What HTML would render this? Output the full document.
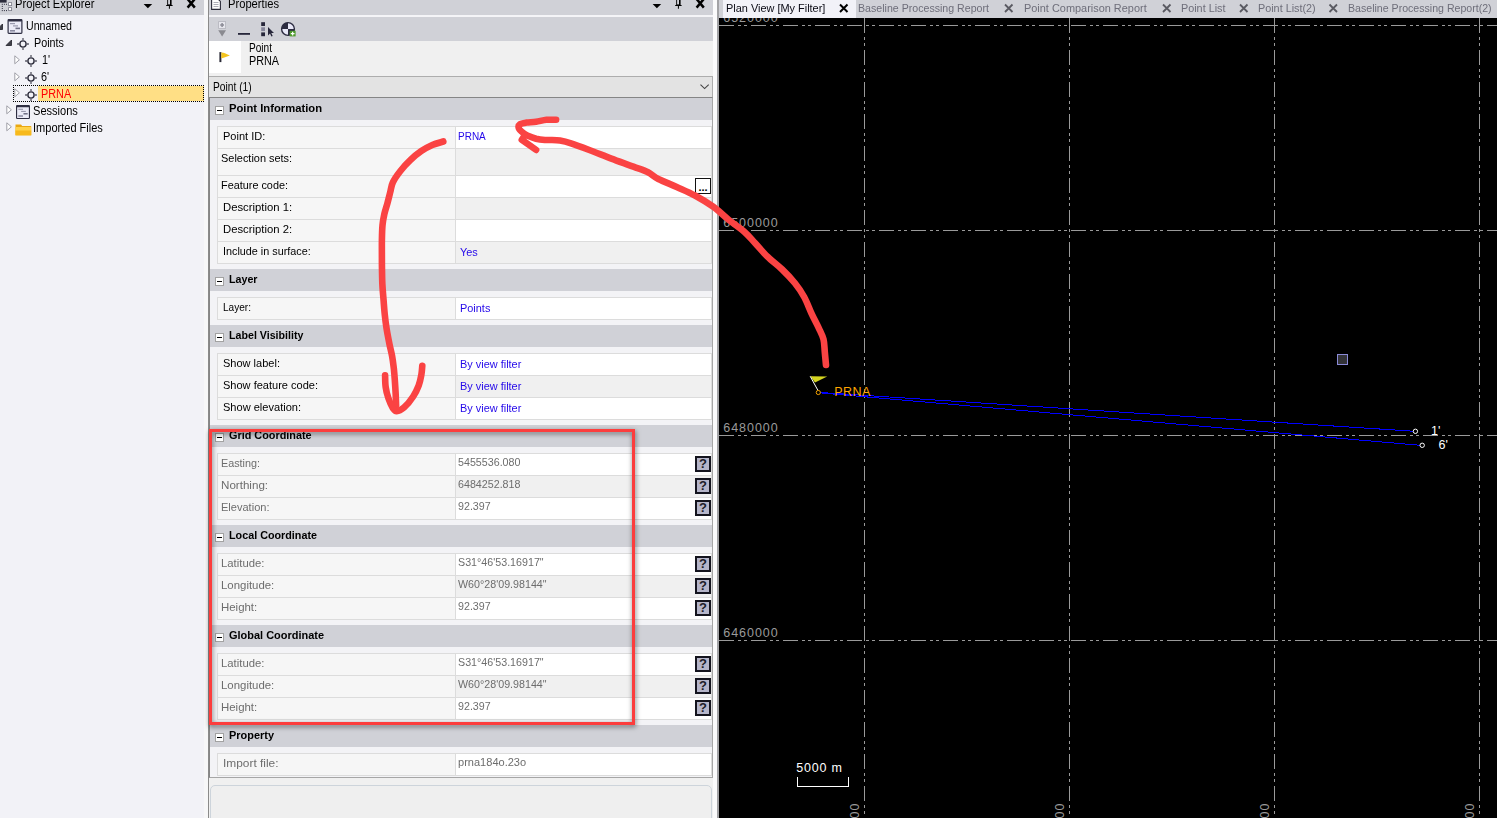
<!DOCTYPE html>
<html>
<head>
<meta charset="utf-8">
<title>Properties</title>
<style>
html,body{margin:0;padding:0}
body{width:1497px;height:818px;overflow:hidden;position:relative;background:#f0f0f5;font-family:"Liberation Sans",sans-serif;font-size:11px;color:#000}
.abs{position:absolute}
.t{position:absolute;white-space:nowrap;line-height:14px;height:14px}
.s{position:absolute;white-space:nowrap;line-height:14px;height:14px;font-size:11.5px;transform:scaleX(.95);transform-origin:0 50%}
#left{position:absolute;left:0;top:0;width:204px;height:818px;background:#f2f2f7}
#lhead{position:absolute;left:0;top:0;width:204px;height:15px;background:#d0d1d7}
#split1{position:absolute;left:204px;top:0;width:5px;height:818px;background:#f7f7f8}
#props{position:absolute;left:209px;top:0;width:504px;height:818px;background:#f0f0f0}
#phead{position:absolute;left:0;top:0;width:504px;height:15px;background:#d0d1d7}
#ptool{position:absolute;left:0;top:17px;width:504px;height:24px;background:#d0d1d7}
#pgap{position:absolute;left:0;top:15px;width:504px;height:2px;background:#f4f4f7}
#pico{position:absolute;left:0;top:41px;width:32px;height:32px;background:#fff}
#pdrop{position:absolute;left:0;top:76px;width:504px;height:21px;background:#e3e3e3;border-top:1px solid #adadad;border-right:1px solid #adadad;box-sizing:border-box}
#grid{position:absolute;left:0;top:97px;width:504px;height:681px;background:#f3f3f6;border-left:1px solid #858585;border-top:1px solid #858585;border-bottom:1px solid #a6a6a6;border-right:1px solid #a6a6a6;box-sizing:border-box}
.sec{position:absolute;left:210px;width:502px;height:22px;background:#d0d1d7}
.sec b{position:absolute;left:19px;top:3px;font-size:11.5px;line-height:14px;white-space:nowrap;transform:scaleX(.98);transform-origin:0 50%}
.sec i{position:absolute;left:5px;top:8px;width:9px;height:9px;background:#fff;border:1px solid #a2a2a2;box-sizing:border-box}
.sec i:after{content:"";position:absolute;left:1px;top:2.6px;width:5px;height:1.7px;background:#000}
.row{position:absolute;left:217px;width:495px;height:22px;box-sizing:border-box;border:1px solid #dcdcdc;border-top:none;background:#f6f6f6}
.row.first{border-top:1px solid #dcdcdc}
.row .v{position:absolute;left:237px;top:0;right:0;bottom:0;border-left:1px solid #dcdcdc;background:#fff}
.row.alt .v{background:#f0f0f0}
.row .l{position:absolute;left:5.4px;top:2px;white-space:nowrap;line-height:14px;font-size:11.5px;transform:scaleX(.95);transform-origin:0 50%}
.row .x{position:absolute;left:4px;top:3px;white-space:nowrap;line-height:14px;font-size:11.5px;transform:scaleX(.95);transform-origin:0 50%;color:#2408ea}
.row.ro .l{color:#6d6d6d;left:3px}
.row.ro .x{color:#6d6d6d;left:2px;top:1px;transform:scaleX(.93)}
.q{position:absolute;right:0;top:2px;width:16px;height:16px;box-sizing:border-box;border:2px solid #14141e;background:#b5b5c9;font-weight:bold;font-size:13px;line-height:12px;text-align:center;color:#1c1c28}
#plan{position:absolute;left:719px;top:18px;width:778px;height:800px;background:#000}
#tabs{position:absolute;left:719px;top:0;width:778px;height:18px;background:#d0d1d7}
.tab{position:absolute;top:1px;white-space:nowrap;line-height:14px;font-size:11.5px;color:#6e6e7a;transform:scaleX(.95);transform-origin:0 50%}
</style>
</head>
<body>
<div id="left"></div>
<div id="lhead"></div>

<!-- LEFT PANEL: project explorer -->
<svg class="abs" style="left:0;top:0" width="14" height="12" viewBox="0 0 14 12">
  <rect x="0" y="0" width="6.6" height="2.6" fill="#2b2b3b"/>
  <g fill="#2b2b3b"><rect x="1.8" y="3.8" width="1" height="1"/><rect x="3.9" y="3.8" width="1" height="1"/><rect x="6" y="3.8" width="1" height="1"/><rect x="1.8" y="5.9" width="1" height="1"/><rect x="1.8" y="8" width="1" height="1"/><rect x="1.8" y="10.1" width="1" height="1"/><rect x="3.9" y="10.1" width="1" height="1"/><rect x="6" y="10.1" width="1" height="1"/></g>
  <rect x="8.6" y="2.6" width="3" height="3" fill="#fff" stroke="#7a7a88" stroke-width=".8"/>
  <rect x="8.6" y="7.6" width="3" height="3" fill="#fff" stroke="#7a7a88" stroke-width=".8"/>
</svg>
<div class="t" style="left:15px;top:-3.3px;font-size:12px;transform:scaleX(.931);transform-origin:0 50%">Project Explorer</div>
<svg class="abs" style="left:140px;top:0" width="60" height="12" viewBox="0 0 60 12">
  <path d="M3.6 4h8.6l-4.3 4.3z" fill="#000"/>
  <path d="M27.2 0h4.4v5h-4.4z M26.2 5h6.4v1h-6.4z M28.9 6h1v2.8h-1z" fill="#000"/>
  <rect x="28.1" y="0" width="1.9" height="4.4" fill="#d0d1d7"/>
  <path d="M47.6 -1l7.2 8.6M54.8 -1l-7.2 8.6" stroke="#000" stroke-width="2.5" fill="none"/>
</svg>
<svg class="abs" style="left:-4px;top:23px" width="8" height="8" viewBox="0 0 8 8"><path d="M6.5 1v5.5h-5.5z" fill="#404048" stroke="#202028" stroke-width=".8"/></svg><svg class="abs" style="left:7px;top:19px" width="16" height="15" viewBox="0 0 15 15"><rect x=".6" y=".6" width="13.8" height="13.8" rx=".8" fill="#ebebf7" stroke="#2e2e42" stroke-width="1.2"/><rect x=".6" y=".4" width="13.8" height="2" rx=".6" fill="#2e2e42"/><rect x="2.5" y="4" width="5" height="1.2" fill="#9a9aae"/><rect x="5.5" y="6.3" width="5" height="1.2" fill="#9a9aae"/><rect x="8" y="8.6" width="4.5" height="1.6" fill="#6e6e84"/><rect x="2.5" y="11" width="5" height="1.6" fill="#8a8aa0"/></svg><div class="t" style="left:25.5px;top:18.7px;font-size:12px;transform:scaleX(0.884);transform-origin:0 50%">Unnamed</div>
<svg class="abs" style="left:5px;top:39px" width="8" height="8" viewBox="0 0 8 8"><path d="M6.5 1v5.5h-5.5z" fill="#404048" stroke="#202028" stroke-width=".8"/></svg><svg class="abs" style="left:16px;top:37px" width="14" height="14" viewBox="0 0 14 14"><circle cx="7" cy="7" r="3.1" fill="#f2f2f7" stroke="#2e2e3c" stroke-width="1.4"/><path d="M7 1.1v2.2M7 10.7v2.2M1.1 7h2.2M10.7 7h2.2" stroke="#555562" stroke-width="1.3"/></svg><div class="t" style="left:33.5px;top:35.7px;font-size:12px;transform:scaleX(0.896);transform-origin:0 50%">Points</div>
<svg class="abs" style="left:14px;top:55px" width="7" height="10" viewBox="0 0 7 10"><path d="M.8 .8v8l4.6-4z" fill="#fff" stroke="#a0a0a8" stroke-width="1"/></svg><svg class="abs" style="left:24px;top:54px" width="14" height="14" viewBox="0 0 14 14"><circle cx="7" cy="7" r="3.1" fill="#f2f2f7" stroke="#2e2e3c" stroke-width="1.4"/><path d="M7 1.1v2.2M7 10.7v2.2M1.1 7h2.2M10.7 7h2.2" stroke="#555562" stroke-width="1.3"/></svg><div class="t" style="left:41.5px;top:52.7px;font-size:12px;transform:scaleX(0.9);transform-origin:0 50%">1'</div>
<svg class="abs" style="left:14px;top:72px" width="7" height="10" viewBox="0 0 7 10"><path d="M.8 .8v8l4.6-4z" fill="#fff" stroke="#a0a0a8" stroke-width="1"/></svg><svg class="abs" style="left:24px;top:71px" width="14" height="14" viewBox="0 0 14 14"><circle cx="7" cy="7" r="3.1" fill="#f2f2f7" stroke="#2e2e3c" stroke-width="1.4"/><path d="M7 1.1v2.2M7 10.7v2.2M1.1 7h2.2M10.7 7h2.2" stroke="#555562" stroke-width="1.3"/></svg><div class="t" style="left:41px;top:69.7px;font-size:12px;transform:scaleX(0.9);transform-origin:0 50%">6'</div>
<div class="abs" style="left:38px;top:86px;width:166px;height:15px;background:#ffdf85"></div>
<div class="abs" style="left:13px;top:85px;width:191px;height:17px;box-sizing:border-box;border:1px dotted #000"></div>
<svg class="abs" style="left:14px;top:88px" width="7" height="10" viewBox="0 0 7 10"><path d="M.8 .8v8l4.6-4z" fill="#fff" stroke="#a0a0a8" stroke-width="1"/></svg><svg class="abs" style="left:24px;top:88px" width="14" height="14" viewBox="0 0 14 14"><circle cx="7" cy="7" r="3.1" fill="#f2f2f7" stroke="#2e2e3c" stroke-width="1.4"/><path d="M7 1.1v2.2M7 10.7v2.2M1.1 7h2.2M10.7 7h2.2" stroke="#555562" stroke-width="1.3"/></svg><div class="t" style="left:41px;top:86.7px;color:#f00;font-size:12px;transform:scaleX(0.903);transform-origin:0 50%">PRNA</div>
<svg class="abs" style="left:6px;top:105px" width="7" height="10" viewBox="0 0 7 10"><path d="M.8 .8v8l4.6-4z" fill="#fff" stroke="#a0a0a8" stroke-width="1"/></svg><svg class="abs" style="left:16px;top:105px" width="14" height="14" viewBox="0 0 15 15"><rect x=".6" y=".6" width="13.8" height="13.8" rx=".8" fill="#ebebf7" stroke="#2e2e42" stroke-width="1.2"/><rect x=".6" y=".4" width="13.8" height="2" rx=".6" fill="#2e2e42"/><rect x="2.5" y="4" width="5" height="1.2" fill="#9a9aae"/><rect x="5.5" y="6.3" width="5" height="1.2" fill="#9a9aae"/><rect x="8" y="8.6" width="4.5" height="1.6" fill="#6e6e84"/><rect x="2.5" y="11" width="5" height="1.6" fill="#8a8aa0"/></svg><div class="t" style="left:33px;top:103.7px;font-size:12px;transform:scaleX(0.922);transform-origin:0 50%">Sessions</div>
<svg class="abs" style="left:6px;top:122px" width="7" height="10" viewBox="0 0 7 10"><path d="M.8 .8v8l4.6-4z" fill="#fff" stroke="#a0a0a8" stroke-width="1"/></svg><svg class="abs" style="left:15px;top:122px" width="17" height="14" viewBox="0 0 17 14"><path d="M.5 2.5h5.5l1.2 1.4h9v9.3h-15.7z" fill="#e9a712"/><path d="M.5 5h15.7v8.2h-15.7z" fill="#ffd24a"/><path d="M.5 8.5h15.7v4.7h-15.7z" fill="#f7b91c"/></svg><div class="t" style="left:33px;top:120.7px;font-size:12px;transform:scaleX(0.919);transform-origin:0 50%">Imported Files</div>
<div id="split1"></div>
<div class="abs" style="left:208px;top:0;width:1px;height:818px;background:#8a8a8a"></div><div class="abs" style="left:209px;top:96px;width:503px;height:1px;background:#aaa"></div>
<div id="props">
  <div id="phead"></div>
  <div id="pgap"></div>
  <div id="ptool"></div>
  <div id="pico"></div>
  <div id="pdrop"></div>
  <div id="grid"></div>
  <div class="abs" style="left:1px;top:785px;width:502px;height:40px;border:1px solid #cdd4db;border-radius:5px;background:#efefef;box-sizing:border-box"></div>
</div>
<!-- properties header -->
<svg class="abs" style="left:211px;top:0" width="11" height="11" viewBox="0 0 11 11">
  <path d="M.6 -1v10.4h8.8v-8l-2.4-2.4z" fill="#fff" stroke="#2c2c3a" stroke-width="1.1"/>
  <path d="M2.5 2.5h5M2.5 4.5h5M2.5 6.5h5" stroke="#9a9aa6" stroke-width=".8"/>
</svg>
<div class="t" style="left:227.5px;top:-3.3px;font-size:12px;transform:scaleX(.932);transform-origin:0 50%">Properties</div>
<svg class="abs" style="left:649px;top:0" width="60" height="12" viewBox="0 0 60 12">
  <path d="M3.6 4h8.6l-4.3 4.3z" fill="#000"/>
  <path d="M27.2 0h4.4v5h-4.4z M26.2 5h6.4v1h-6.4z M28.9 6h1v2.8h-1z" fill="#000"/>
  <rect x="28.1" y="0" width="1.9" height="4.4" fill="#d0d1d7"/>
  <path d="M47.6 -1l7.2 8.6M54.8 -1l-7.2 8.6" stroke="#000" stroke-width="2.5" fill="none"/>
</svg>
<!-- toolbar icons -->
<svg class="abs" style="left:215px;top:19px" width="90" height="20" viewBox="0 0 90 20">
  <rect x="3.6" y="2.6" width="7" height="6.8" fill="#e6e6ec" stroke="#b4b4bc" stroke-width=".8"/>
  <path d="M7.1 4.1v3.8M5.2 6h3.8" stroke="#8c8c96" stroke-width="1.5"/>
  <path d="M3.2 11.2h7.8l-3.9 6.4z" fill="#8a8a90"/>
  <rect x="23" y="14" width="12" height="1.8" fill="#26263a"/>
  <rect x="46.2" y="3.2" width="3.8" height="3.8" fill="#26263a"/>
  <rect x="46.2" y="8.3" width="3.8" height="3.8" fill="#85859a"/>
  <rect x="46.2" y="13.4" width="3.8" height="3.8" fill="#26263a"/>
  <path d="M53 8v8.4l2-1.9 1.4 3 1.3-.6-1.4-2.9h2.7z" fill="#26263a"/>
  <circle cx="73" cy="10" r="6.4" fill="#e9e9f8" stroke="#2c2c40" stroke-width="1.4"/>
  <path d="M73 10v-6.4a6.4 6.4 0 0 0-6.4 6.4z" fill="#2c2c40"/>
  <path d="M73 10h6.4a6.4 6.4 0 0 1-6.4 6.4z" fill="#2c2c40"/>
  <rect x="74.7" y="11.8" width="5.9" height="5.6" fill="#4e9a2c"/>
  <path d="M77.65 12.8v3.6M75.8 14.6h3.7" stroke="#fff" stroke-width="1.2"/>
</svg>
<!-- flag -->
<svg class="abs" style="left:218px;top:51px" width="16" height="14" viewBox="0 0 16 14">
  <path d="M2.4 1.1v10" stroke="#2a2a36" stroke-width="2"/>
  <path d="M3.3 1.5c3 0 5.5 1.4 8.6 3.1c-2.8 1.1-5.4 2.2-8.6 3z" fill="#f4c41c"/>
</svg>
<div class="t" style="left:249px;top:40.6px;font-size:12px;transform:scaleX(.84);transform-origin:0 50%">Point</div>
<div class="t" style="left:249px;top:53.8px;font-size:12px;transform:scaleX(.9);transform-origin:0 50%">PRNA</div>
<div class="t" style="left:213.3px;top:79.6px;font-size:12px;transform:scaleX(.853);transform-origin:0 50%">Point (1)</div>
<svg class="abs" style="left:698.6px;top:83px" width="12" height="8" viewBox="0 0 12 8"><path d="M1.5 1.6l4.1 4 4.1-4" fill="none" stroke="#444" stroke-width="1.1"/></svg>
<div class="sec" style="top:98px"><i></i><b style="transform:scaleX(0.977)">Point Information</b></div>
<div class="row first" style="top:126px;height:23px"><span class="l" style="transform:scaleX(0.957)">Point ID:</span><div class="v"><span class="x" style="left:2px;top:2px;transform:scaleX(.87)">PRNA</span></div></div>
<div class="row alt" style="top:149px;height:27px"><span class="l" style="left:3.4px;transform:scaleX(0.951)">Selection sets:</span><div class="v"></div></div>
<div class="row" style="top:176px;height:22px"><span class="l" style="left:3.4px;transform:scaleX(0.944)">Feature code:</span><div class="v"><span class="abs" style="right:0;top:2px;width:16px;height:16px;box-sizing:border-box;border:1px solid #111;background:#fff;font-size:11px;font-weight:bold;line-height:17px;text-align:center;overflow:hidden;color:#000">...</span></div></div>
<div class="row alt" style="top:198px;height:22px"><span class="l" style="transform:scaleX(0.983)">Description 1:</span><div class="v"></div></div>
<div class="row" style="top:220px;height:22px"><span class="l" style="transform:scaleX(0.983)">Description 2:</span><div class="v"></div></div>
<div class="row alt" style="top:242px;height:22px"><span class="l" style="transform:scaleX(0.94)">Include in surface:</span><div class="v"><span class="x">Yes</span></div></div>
<div class="sec" style="top:269px"><i></i><b style="transform:scaleX(0.929)">Layer</b></div>
<div class="row first" style="top:297px;height:23px"><span class="l" style="transform:scaleX(0.876)">Layer:</span><div class="v"><span class="x">Points</span></div></div>
<div class="sec" style="top:325px"><i></i><b style="transform:scaleX(0.927)">Label Visibility</b></div>
<div class="row first" style="top:353px;height:23px"><span class="l" style="transform:scaleX(0.958)">Show label:</span><div class="v"><span class="x">By view filter</span></div></div>
<div class="row alt" style="top:376px;height:22px"><span class="l" style="transform:scaleX(0.959)">Show feature code:</span><div class="v"><span class="x">By view filter</span></div></div>
<div class="row" style="top:398px;height:22px"><span class="l" style="transform:scaleX(0.961)">Show elevation:</span><div class="v"><span class="x">By view filter</span></div></div>
<div class="sec" style="top:425px"><i></i><b style="transform:scaleX(0.944)">Grid Coordinate</b></div>
<div class="row first ro" style="top:453px;height:23px"><span class="l" style="transform:scaleX(0.938)">Easting:</span><div class="v"><span class="x">5455536.080</span><span class="q">?</span></div></div>
<div class="row alt ro" style="top:476px;height:22px"><span class="l" style="transform:scaleX(1.009)">Northing:</span><div class="v"><span class="x">6484252.818</span><span class="q">?</span></div></div>
<div class="row ro" style="top:498px;height:22px"><span class="l" style="transform:scaleX(0.96)">Elevation:</span><div class="v"><span class="x">92.397</span><span class="q">?</span></div></div>
<div class="sec" style="top:525px"><i></i><b style="transform:scaleX(0.937)">Local Coordinate</b></div>
<div class="row first ro" style="top:553px;height:23px"><span class="l" style="transform:scaleX(0.984)">Latitude:</span><div class="v"><span class="x">S31°46'53.16917"</span><span class="q">?</span></div></div>
<div class="row alt ro" style="top:576px;height:22px"><span class="l" style="transform:scaleX(0.992)">Longitude:</span><div class="v"><span class="x">W60°28'09.98144"</span><span class="q">?</span></div></div>
<div class="row ro" style="top:598px;height:22px"><span class="l" style="transform:scaleX(0.993)">Height:</span><div class="v"><span class="x">92.397</span><span class="q">?</span></div></div>
<div class="sec" style="top:625px"><i></i><b style="transform:scaleX(0.953)">Global Coordinate</b></div>
<div class="row first ro" style="top:653px;height:23px"><span class="l" style="transform:scaleX(0.984)">Latitude:</span><div class="v"><span class="x">S31°46'53.16917"</span><span class="q">?</span></div></div>
<div class="row alt ro" style="top:676px;height:22px"><span class="l" style="transform:scaleX(0.992)">Longitude:</span><div class="v"><span class="x">W60°28'09.98144"</span><span class="q">?</span></div></div>
<div class="row ro" style="top:698px;height:22px"><span class="l" style="transform:scaleX(0.993)">Height:</span><div class="v"><span class="x">92.397</span><span class="q">?</span></div></div>
<div class="sec" style="top:725px"><i></i><b style="transform:scaleX(0.951)">Property</b></div>
<div class="row first ro" style="top:753px;height:23px"><span class="l" style="left:5.4px;transform:scaleX(1.034)">Import file:</span><div class="v"><span class="x" style="transform:scaleX(.96)">prna184o.23o</span></div></div>
<div class="abs" style="left:713px;top:0;width:4px;height:818px;background:#fbfbfc"></div>
<div class="abs" style="left:717px;top:0;width:2px;height:818px;background:#a3a3a6"></div>
<div id="tabs"></div>
<div class="abs" style="left:723px;top:0;width:133px;height:18px;background:#f2f2f8"></div>
<div class="tab" style="left:725.5px;color:#0a0a14">Plan View [My Filter]</div>
<div class="tab" style="left:858px;transform:scaleX(.923)">Baseline Processing Report</div>
<div class="tab" style="left:1023.5px">Point Comparison Report</div>
<div class="tab" style="left:1181px;transform:scaleX(.94)">Point List</div>
<div class="tab" style="left:1258.3px;transform:scaleX(.94)">Point List(2)</div>
<div class="tab" style="left:1348px;transform:scaleX(.921)">Baseline Processing Report(2)</div>
<svg class="abs" style="left:719px;top:0" width="778" height="18" viewBox="719 0 778 18">
  <g fill="none" stroke-width="2">
    <path d="M840 4.5l7.5 7.5M847.5 4.5l-7.5 7.5" stroke="#000"/>
    <g stroke="#5a5a62" stroke-width="1.8">
    <path d="M1005 4.5l7.5 7.5M1012.5 4.5l-7.5 7.5"/>
    <path d="M1163 4.5l7.5 7.5M1170.5 4.5l-7.5 7.5"/>
    <path d="M1240 4.5l7.5 7.5M1247.5 4.5l-7.5 7.5"/>
    <path d="M1329.5 4.5l7.5 7.5M1337 4.5l-7.5 7.5"/>
    </g>
  </g>
</svg>
<div id="plan"></div>
<svg class="abs" style="left:719px;top:18px" width="778" height="800" viewBox="719 18 778 800" font-family="'Liberation Sans',sans-serif">
  <g stroke="#9a9a9a" stroke-width="1" fill="none" shape-rendering="crispEdges" stroke-dasharray="15 4 3 3 3 4">
    <path d="M719 25.5H1497"/>
    <path d="M719 230.5H1497"/>
    <path d="M719 435.5H1497"/>
    <path d="M719 640.5H1497"/>
    <path d="M864.5 18V818"/>
    <path d="M1069.5 18V818"/>
    <path d="M1274.5 18V818"/>
    <path d="M1479.5 18V818"/>
  </g>
  <g fill="#9a9a9a" font-size="12.5" letter-spacing=".95">
    <text x="723.3" y="22">6520000</text>
    <text x="723.3" y="227">6500000</text>
    <text x="723.3" y="432">6480000</text>
    <text x="723.3" y="637">6460000</text>
    <text transform="translate(859.3 858) rotate(-90)">5460000</text>
    <text transform="translate(1064.3 858) rotate(-90)">5480000</text>
    <text transform="translate(1269.3 858) rotate(-90)">5500000</text>
    <text transform="translate(1474.3 858) rotate(-90)">5520000</text>
  </g>
  <!-- baselines -->
  <g stroke="#0000ff" stroke-width="1" fill="none" shape-rendering="crispEdges">
    <path d="M820.5 392.5L1413 431.2"/>
    <path d="M820.5 392.9L1420 445.3"/>
  </g>
  <!-- PRNA flag -->
  <path d="M810.2 376.2L827.2 376.4L815 382.6z" fill="#d4d420"/>
  <path d="M810.2 376.3L818 390.5" stroke="#fff" stroke-width="1"/>
  <circle cx="818.3" cy="392.5" r="2.1" fill="none" stroke="#f0a000" stroke-width="1"/>
  <text x="834.2" y="395.7" fill="#ffa500" font-size="12.5" letter-spacing=".45">PRNA</text>
  <!-- points -->
  <circle cx="1415.4" cy="431.3" r="2.2" fill="#000" stroke="#fff" stroke-width="1"/>
  <circle cx="1422.2" cy="445.3" r="2.2" fill="#000" stroke="#fff" stroke-width="1"/>
  <text x="1431" y="435" fill="#fff" font-size="12.5">1'</text>
  <text x="1438.5" y="449" fill="#fff" font-size="12.5">6'</text>
  <rect x="1337.5" y="354.5" width="10" height="10" fill="#333338" stroke="#8a8ad8" stroke-width="1"/>
  <!-- scale bar -->
  <text x="796.3" y="772" fill="#fff" font-size="12.5" letter-spacing=".8">5000 m</text>
  <path d="M797.5 777V786.5H848.5V777" fill="none" stroke="#fff" stroke-width="1" shape-rendering="crispEdges"/>
</svg>
<!-- red annotations -->
<svg class="abs" style="left:0;top:0;pointer-events:none" width="1497" height="818" viewBox="0 0 1497 818">
  <defs><filter id="sh" x="-5%" y="-5%" width="110%" height="110%"><feDropShadow dx=".6" dy="1.8" stdDeviation="2.4" flood-color="#000" flood-opacity=".55"/></filter></defs>
  <rect x="210.5" y="430.5" width="423" height="293" fill="none" stroke="#fc3c3c" stroke-width="3" filter="url(#sh)"/>
  <g fill="none" stroke="#fa4343" stroke-width="6.6" stroke-linecap="round" stroke-linejoin="round">
    <path d="M826.0 365.0C825.8 362.9 825.2 356.4 824.8 352.1C824.4 347.8 824.5 343.3 823.5 339.3C822.5 335.3 820.9 332.6 818.9 328.3C816.9 324.0 814.0 318.8 811.6 313.6C809.2 308.4 807.0 302.1 804.2 297.0C801.4 291.9 798.7 287.9 795.0 283.3C791.3 278.7 786.8 273.9 782.2 269.5C777.6 265.1 772.0 261.1 767.5 256.7C763.0 252.3 758.9 247.2 755.0 243.0C751.1 238.8 748.4 235.4 744.0 231.5C739.6 227.6 733.7 223.8 728.6 219.7C723.5 215.6 718.9 210.8 713.3 206.8C707.7 202.8 701.1 198.8 695.0 195.5C688.9 192.2 682.8 189.7 676.7 186.9C670.6 184.2 663.1 181.4 658.3 179.0C653.5 176.6 652.1 174.4 648.0 172.3C643.9 170.2 639.5 169.0 633.4 166.7C627.3 164.4 618.8 161.4 611.4 158.6C604.0 155.8 596.0 152.5 589.3 150.0C582.6 147.5 575.9 145.0 571.0 143.4C566.1 141.8 563.5 141.2 560.0 140.6C556.5 140.0 552.5 140.1 550.0 140.0C547.5 139.9 547.2 140.2 544.9 140.0C542.6 139.8 539.0 139.4 536.1 138.7C533.2 137.9 529.4 136.4 527.3 135.5C525.1 134.6 524.6 134.2 523.2 133.0C521.8 131.8 519.3 129.7 518.8 128.2C518.3 126.7 518.7 125.1 520.0 124.2C521.3 123.3 523.8 123.0 526.5 122.6C529.2 122.2 532.8 122.3 536.1 121.8C539.4 121.3 543.2 120.1 546.5 119.8C549.8 119.5 554.5 119.8 556.1 119.8"/>
    <path d="M525 135L521.8 139.8L536.1 149.9"/>
    <path d="M443.3 141.5C441.5 142.1 436.0 143.4 432.3 145.0C428.6 146.6 425.0 148.6 421.3 151.1C417.6 153.6 413.8 156.8 410.3 160.2C406.8 163.5 403.1 167.5 400.2 171.2C397.3 174.9 394.6 178.7 392.9 182.2C391.2 185.7 391.1 188.8 390.2 192.3C389.3 195.8 388.4 199.6 387.4 203.3C386.4 207.0 385.1 210.6 384.3 214.3C383.5 218.0 382.9 221.0 382.5 225.3C382.1 229.6 382.0 234.5 381.9 240.0C381.8 245.5 381.9 253.3 381.9 258.3C381.9 263.3 381.9 265.6 382.0 270.0C382.1 274.4 382.1 279.8 382.4 284.7C382.6 289.6 383.1 294.4 383.5 299.3C383.9 304.2 384.2 309.1 384.7 314.0C385.2 318.9 385.8 323.8 386.6 328.7C387.4 333.6 388.4 338.7 389.3 343.3C390.2 347.9 391.3 351.9 392.1 356.2C392.9 360.5 393.4 365.0 393.9 369.0C394.3 373.0 394.5 375.7 394.8 380.0C395.1 384.3 395.5 390.4 395.7 394.7C395.9 399.0 396.0 403.9 396.1 405.7"/>
    <path d="M385.1 375.4C385.2 377.4 385.1 383.5 385.7 387.3C386.2 391.1 387.2 394.8 388.4 398.3C389.6 401.8 391.6 406.2 393.0 408.4C394.4 410.5 394.9 411.3 396.7 411.2C398.5 411.1 401.2 409.9 404.0 407.5C406.8 405.1 410.8 400.2 413.2 396.5C415.6 392.8 417.3 389.2 418.7 385.5C420.1 381.8 420.8 377.8 421.4 374.5C422.0 371.2 422.1 367.2 422.3 365.7"/>
  </g>
</svg>
</body>
</html>
